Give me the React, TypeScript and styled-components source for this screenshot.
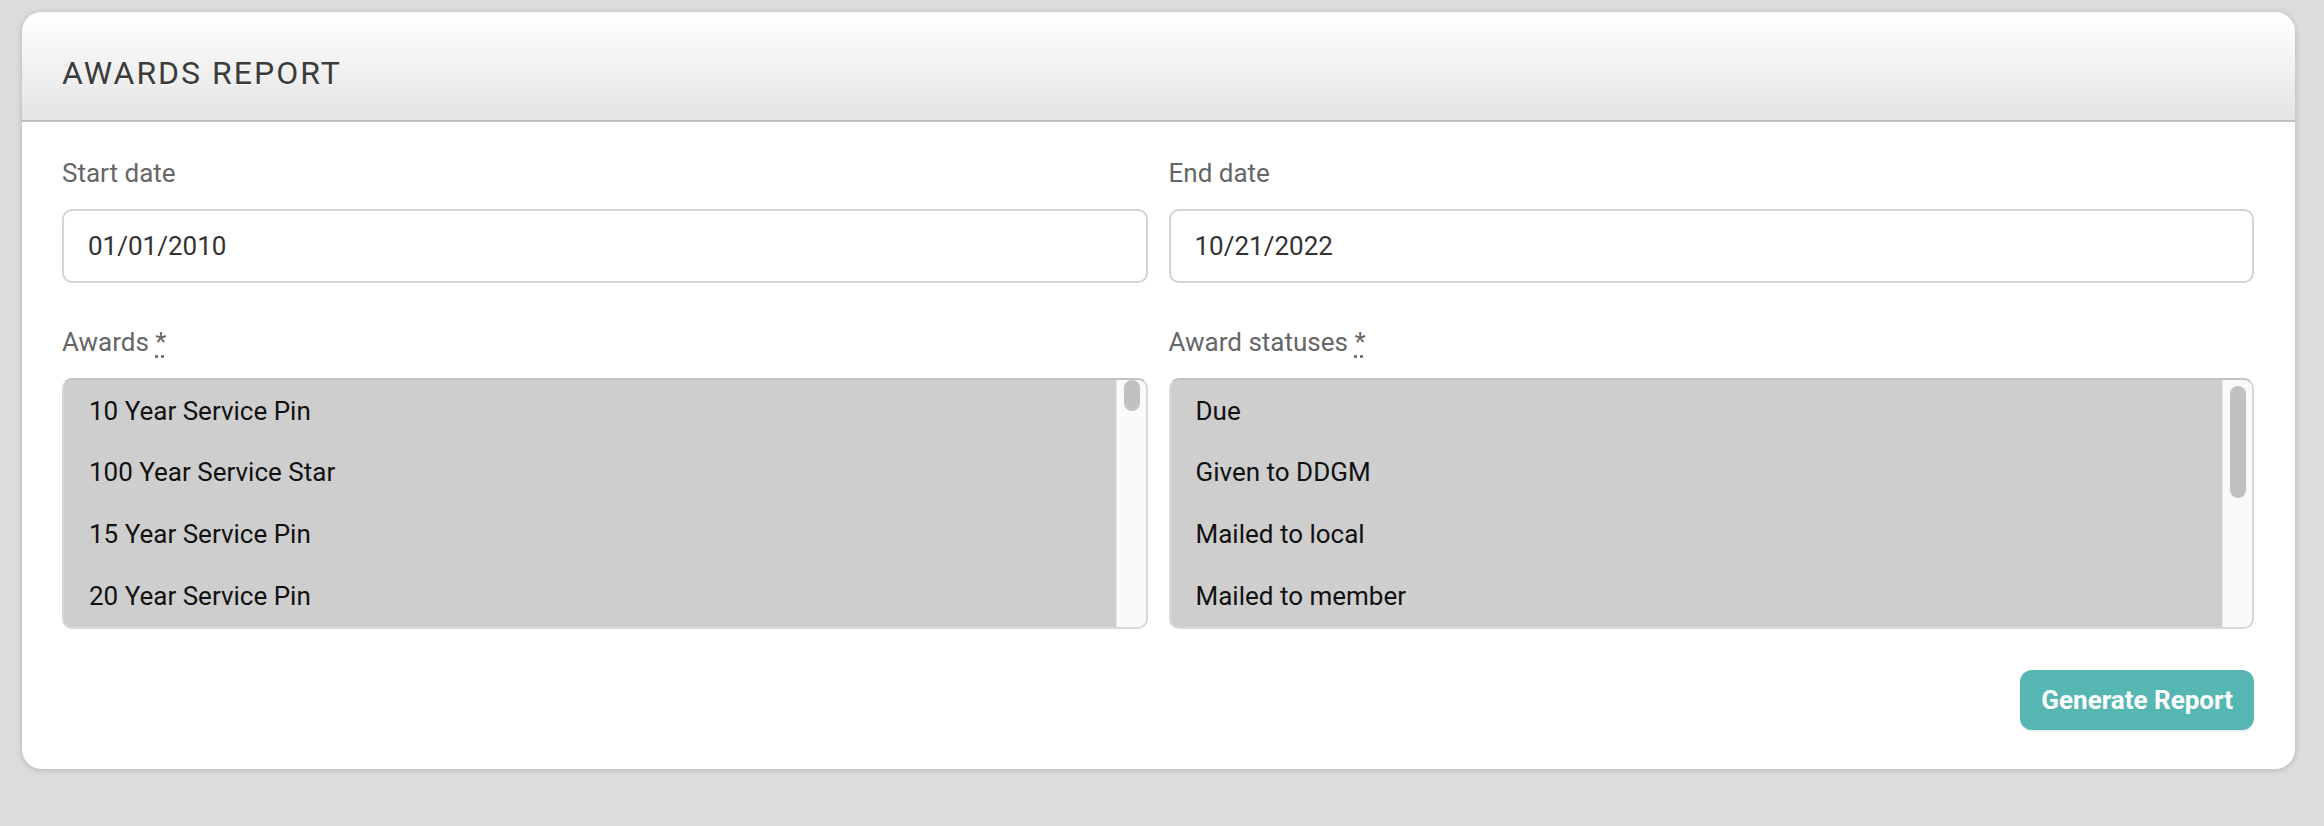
import React from 'react'
import styled, { createGlobalStyle } from 'styled-components'

const GlobalStyle = createGlobalStyle`
    html, body {
        margin: 0;
        background: #dcdcdc;
    }
    body {
        font-family: Roboto, "Liberation Sans", Arial, sans-serif;
    }
`

const Page = styled.div`
    box-sizing: border-box;
    min-height: 100vh;
    padding: 12px 29px 20px 22px;
`

const Card = styled.section`
    background: #ffffff;
    border-radius: 20px;
    overflow: hidden;
    box-shadow: 0 1px 6px rgba(0, 0, 0, 0.18);
`

const CardHeader = styled.header`
    box-sizing: border-box;
    height: 110px;
    padding: 42px 40px 0;
    background: linear-gradient(#ffffff, #e4e4e4);
    border-bottom: 2px solid #bfbfbf;
`

const Title = styled.h1`
    margin: 0;
    font-size: 32px;
    line-height: 38px;
    font-weight: 400;
    letter-spacing: 2px;
    color: #3b3b3b;
    text-shadow: 0 1px 1px #ffffff;
`

const CardBody = styled.div`
    padding: 36px 41px 39px 40px;
`

const FieldGrid = styled.div`
    display: grid;
    grid-template-columns: 1fr 1fr;
    column-gap: 21px;
    row-gap: 44px;
`

const Field = styled.div`
    display: flex;
    flex-direction: column;
    min-width: 0;
`

const Label = styled.label`
    font-size: 26px;
    line-height: 31px;
    color: #666666;
    margin-bottom: 20px;
`

const Required = styled.abbr`
    text-decoration: underline dotted;
    text-underline-offset: 4px;
    cursor: help;
`

const DateInput = styled.input`
    box-sizing: border-box;
    height: 74px;
    width: 100%;
    padding: 0 24px;
    border: 2px solid #d3d3d8;
    border-radius: 10px;
    font-family: inherit;
    font-size: 26px;
    color: #333333;
    background: #ffffff;
    outline: none;
`

const ListBox = styled.div`
    box-sizing: border-box;
    height: 251px;
    display: flex;
    border: 2px solid #d8d8dc;
    border-top-color: #c2c2c6;
    border-radius: 10px;
    background: #cecece;
    overflow: hidden;
`

const Options = styled.div`
    flex: 1;
    padding-left: 25px;
    overflow: hidden;
`

const Option = styled.div`
    height: 61.67px;
    display: flex;
    align-items: center;
    font-size: 26px;
    color: #111111;
    white-space: nowrap;
`

const ScrollTrack = styled.div`
    box-sizing: border-box;
    width: 30px;
    flex-shrink: 0;
    background: #fafafa;
    border-left: 1px solid #e4e4e4;
`

const ScrollThumb = styled.div<{ offset: number; size: number }>`
    width: 16px;
    margin-left: 7px;
    margin-top: ${({ offset }) => offset}px;
    height: ${({ size }) => size}px;
    border-radius: 8px;
    background: #c1c1c1;
`

const Footer = styled.div`
    display: flex;
    justify-content: flex-end;
    margin-top: 41px;
`

const PrimaryButton = styled.button`
    height: 60px;
    padding: 0 21px;
    border: none;
    border-radius: 12px;
    background: #56b6b1;
    color: #ffffff;
    font-family: inherit;
    font-size: 26px;
    font-weight: 700;
    box-shadow: 0 2px 2px rgba(0, 0, 0, 0.08);
    cursor: pointer;
`

const awards = ['10 Year Service Pin', '100 Year Service Star', '15 Year Service Pin', '20 Year Service Pin']
const statuses = ['Due', 'Given to DDGM', 'Mailed to local', 'Mailed to member']

type MultiListProps = {
    items: string[]
    thumbOffset: number
    thumbSize: number
}

const MultiList = ({ items, thumbOffset, thumbSize }: MultiListProps) => (
    <ListBox>
        <Options>
            {items.map(item => <Option key={item}>{item}</Option>)}
        </Options>
        <ScrollTrack>
            <ScrollThumb offset={thumbOffset} size={thumbSize} />
        </ScrollTrack>
    </ListBox>
)

const App: React.FunctionComponent = () => {
    return (
        <>
            <GlobalStyle />
            <Page>
                <Card>
                    <CardHeader>
                        <Title>AWARDS REPORT</Title>
                    </CardHeader>
                    <CardBody>
                        <FieldGrid>
                            <Field>
                                <Label>Start date</Label>
                                <DateInput readOnly defaultValue="01/01/2010" />
                            </Field>
                            <Field>
                                <Label>End date</Label>
                                <DateInput readOnly defaultValue="10/21/2022" />
                            </Field>
                            <Field>
                                <Label>Awards <Required title="required">*</Required></Label>
                                <MultiList items={awards} thumbOffset={0} thumbSize={31} />
                            </Field>
                            <Field>
                                <Label>Award statuses <Required title="required">*</Required></Label>
                                <MultiList items={statuses} thumbOffset={6} thumbSize={112} />
                            </Field>
                        </FieldGrid>
                        <Footer>
                            <PrimaryButton>Generate Report</PrimaryButton>
                        </Footer>
                    </CardBody>
                </Card>
            </Page>
        </>
    )
}

export default App
